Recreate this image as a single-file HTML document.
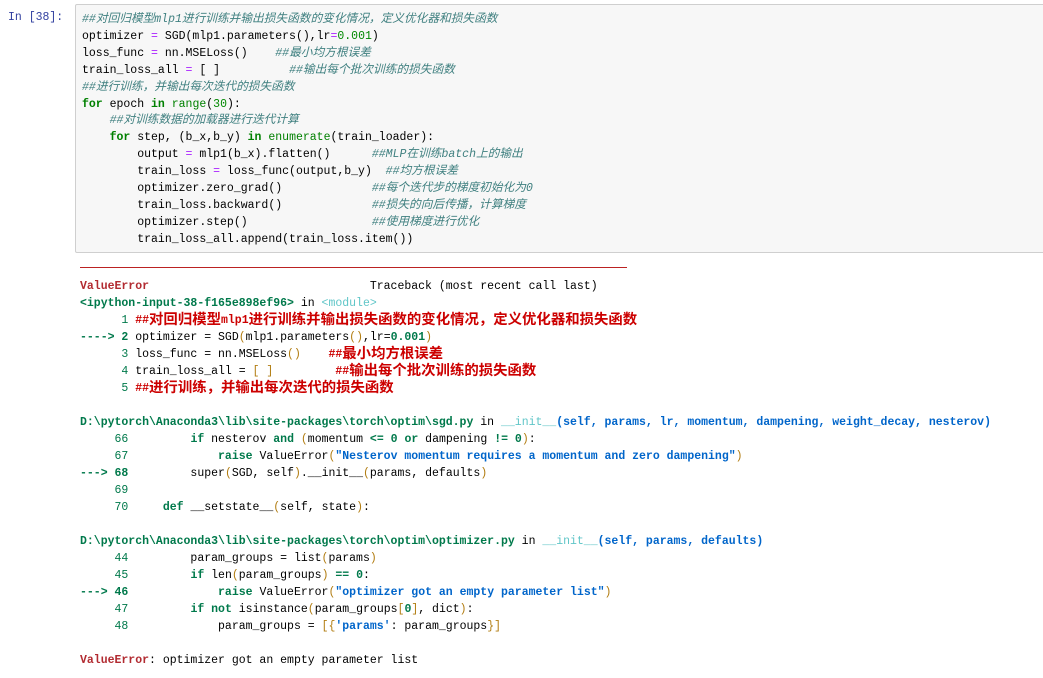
<!DOCTYPE html>
<html><head><meta charset="utf-8"><style>
body{margin:0;background:#fff;width:1043px;height:678px;overflow:hidden;position:relative;font-family:"Liberation Mono","Noto Sans CJK SC",monospace;}
pre{margin:0;font-family:"Liberation Mono","Noto Sans CJK SC",monospace;font-size:11.5px;line-height:16.9px;color:#000;white-space:pre;}
.c{font-size:11.7px;line-height:1px;font-family:"Noto Sans CJK SC",sans-serif;}
.out .c{font-size:14.4px;position:relative;top:1px;}
.prompt{position:absolute;left:8px;top:11px;font-size:11.5px;color:#303f9f;font-family:"Liberation Mono",monospace;}
.cell{position:absolute;left:75px;top:4px;width:975px;height:247px;background:#f7f7f7;border:1px solid #cfcfcf;border-radius:2px;}
.cell pre{position:absolute;left:6px;top:7px;}
.cm{color:#408080;font-style:italic}
.kw{color:#008000;font-weight:bold}
.nb{color:#008000}
.num{color:#080}
.op{color:#aa22ff}
.out{position:absolute;left:80px;top:278px;}
.out pre{line-height:17px;}
.sep{position:absolute;left:80px;top:267px;width:547px;height:1px;background:#b22;}
.r{color:#b22b31;font-weight:bold}
.rd{color:#c00;font-weight:bold}
.g{color:#00794b;font-weight:bold}
.gn{color:#00794b}
.cy{color:#60c6c8}
.bl{color:#0065ca;font-weight:bold}
.y{color:#b27d12}
</style></head><body>
<div class="prompt">In  [38]:</div>
<div class="cell"><pre><span class="cm">##<span class="c">对回归模型</span>mlp1<span class="c">进行训练并输出损失函数的变化情况，定义优化器和损失函数</span></span>
optimizer <span class="op">=</span> SGD(mlp1.parameters(),lr<span class="op">=</span><span class="num">0.001</span>)
loss_func <span class="op">=</span> nn.MSELoss()    <span class="cm">##<span class="c">最小均方根误差</span></span>
train_loss_all <span class="op">=</span> [ ]          <span class="cm">##<span class="c">输出每个批次训练的损失函数</span></span>
<span class="cm">##<span class="c">进行训练，并输出每次迭代的损失函数</span></span>
<span class="kw">for</span> epoch <span class="kw">in</span> <span class="nb">range</span>(<span class="num">30</span>):
    <span class="cm">##<span class="c">对训练数据的加载器进行迭代计算</span></span>
    <span class="kw">for</span> step, (b_x,b_y) <span class="kw">in</span> <span class="nb">enumerate</span>(train_loader):
        output <span class="op">=</span> mlp1(b_x).flatten()      <span class="cm">##MLP<span class="c">在训练</span>batch<span class="c">上的输出</span></span>
        train_loss <span class="op">=</span> loss_func(output,b_y)  <span class="cm">##<span class="c">均方根误差</span></span>
        optimizer.zero_grad()             <span class="cm">##<span class="c">每个迭代步的梯度初始化为</span>0</span>
        train_loss.backward()             <span class="cm">##<span class="c">损失的向后传播，计算梯度</span></span>
        optimizer.step()                  <span class="cm">##<span class="c">使用梯度进行优化</span></span>
        train_loss_all.append(train_loss.item())</pre></div>
<div class="sep"></div>
<div class="out"><pre><span class="r">ValueError</span>                                Traceback (most recent call last)
<span class="g">&lt;ipython-input-38-f165e898ef96&gt;</span> in <span class="cy">&lt;module&gt;</span>
<span class="gn">      1</span> <span class="rd">##<span class="c">对回归模型</span>mlp1<span class="c">进行训练并输出损失函数的变化情况，定义优化器和损失函数</span></span>
<span class="g">----&gt; 2</span> optimizer = SGD<span class="y">(</span>mlp1.parameters<span class="y">()</span>,lr=<span class="g">0.001</span><span class="y">)</span>
<span class="gn">      3</span> loss_func = nn.MSELoss<span class="y">()</span>    <span class="rd">##<span class="c">最小均方根误差</span></span>
<span class="gn">      4</span> train_loss_all = <span class="y">[ ]</span>         <span class="rd">##<span class="c">输出每个批次训练的损失函数</span></span>
<span class="gn">      5</span> <span class="rd">##<span class="c">进行训练，并输出每次迭代的损失函数</span></span>

<span class="g">D:\pytorch\Anaconda3\lib\site-packages\torch\optim\sgd.py</span> in <span class="cy">__init__</span><span class="bl">(self, params, lr, momentum, dampening, weight_decay, nesterov)</span>
<span class="gn">     66</span>         <span class="g">if</span> nesterov <span class="g">and</span> <span class="y">(</span>momentum <span class="g">&lt;=</span> <span class="g">0</span> <span class="g">or</span> dampening <span class="g">!=</span> <span class="g">0</span><span class="y">)</span>:
<span class="gn">     67</span>             <span class="g">raise</span> ValueError<span class="y">(</span><span class="bl">"Nesterov momentum requires a momentum and zero dampening"</span><span class="y">)</span>
<span class="g">---&gt; 68</span>         super<span class="y">(</span>SGD, self<span class="y">)</span>.__init__<span class="y">(</span>params, defaults<span class="y">)</span>
<span class="gn">     69</span>
<span class="gn">     70</span>     <span class="g">def</span> __setstate__<span class="y">(</span>self, state<span class="y">)</span>:

<span class="g">D:\pytorch\Anaconda3\lib\site-packages\torch\optim\optimizer.py</span> in <span class="cy">__init__</span><span class="bl">(self, params, defaults)</span>
<span class="gn">     44</span>         param_groups = list<span class="y">(</span>params<span class="y">)</span>
<span class="gn">     45</span>         <span class="g">if</span> len<span class="y">(</span>param_groups<span class="y">)</span> <span class="g">==</span> <span class="g">0</span>:
<span class="g">---&gt; 46</span>             <span class="g">raise</span> ValueError<span class="y">(</span><span class="bl">"optimizer got an empty parameter list"</span><span class="y">)</span>
<span class="gn">     47</span>         <span class="g">if</span> <span class="g">not</span> isinstance<span class="y">(</span>param_groups<span class="y">[</span><span class="g">0</span><span class="y">]</span>, dict<span class="y">)</span>:
<span class="gn">     48</span>             param_groups = <span class="y">[{</span><span class="bl">'params'</span>: param_groups<span class="y">}]</span>

<span class="r">ValueError</span>: optimizer got an empty parameter list</pre></div>
</body></html>
